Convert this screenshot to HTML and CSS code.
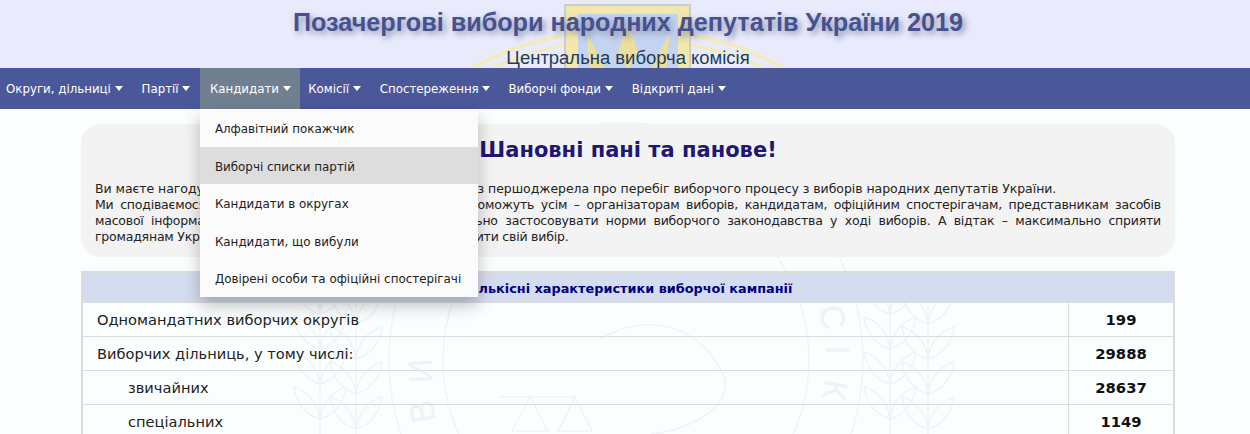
FILE: index.html
```html
<!DOCTYPE html>
<html lang="uk">
  <head>
    <meta charset="UTF-8" />
    <meta name="viewport" content="width=device-width, initial-scale=1.0" />
    <title>Позачергові вибори народних депутатів України 2019</title>
    <link rel="stylesheet" href="styles.css">
  </head>
  <body>
    <header>
      <svg class="header-emblem" viewBox="0 0 400 70" width="400" height="70" aria-hidden="true">
        <g fill="none" stroke="#f1ebbd">
          <path d="M42 70 C70 52 100 42 137 35" stroke-width="4"/>
          <path d="M60 70 C85 58 110 50 137 45" stroke-width="3"/>
          <path d="M262 35 C300 42 330 52 358 70" stroke-width="4"/>
          <path d="M262 45 C290 50 315 58 340 70" stroke-width="3"/>
        </g>
        <path d="M137 5 H262 V70 H137 Z" fill="#f2e8ab" stroke="#c9cbd6" stroke-width="2"/>
        <path d="M150 14 H250 V70 H150 Z" fill="#c3d3f1"/>
        <path d="M158 32 L178 70 H162 Z M242 32 L222 70 H238 Z M200 22 L190 52 L200 70 L210 52 Z" fill="#ecdf9c"/>
      </svg>
      <h1>Позачергові вибори народних депутатів України 2019</h1>
      <h2>Центральна виборча комісія</h2>
    </header>
    <nav>
      <a href="#okruhy">Округи, дільниці <i class="caret"></i></a>
      <a href="#partii" class="tight">Партії <i class="caret"></i></a>
      <div class="dropdown">
        <a href="#kandydaty" class="selected">Кандидати <i class="caret"></i></a>
        <div class="dropdown-content">
          <a href="#index">Алфавітний покажчик</a>
          <a href="#lists" class="hover">Виборчі списки партій</a>
          <a href="#districts">Кандидати в округах</a>
          <a href="#dropped">Кандидати, що вибули</a>
          <a href="#trusted">Довірені особи та офіційні спостерігачі</a>
        </div>
      </div>
      <a href="#komisii">Комісії <i class="caret"></i></a>
      <a href="#observers" class="tight">Спостереження <i class="caret"></i></a>
      <a href="#funds">Виборчі фонди <i class="caret"></i></a>
      <a href="#open">Відкриті дані <i class="caret"></i></a>
    </nav>
    <main>
      <svg class="watermark" viewBox="0 0 1250 325" width="1250" height="325" aria-hidden="true">
        <defs>
          <g id="leaf-pair">
            <path d="M0 0 C-14 -4 -24 -16 -26 -32 C-12 -28 -2 -16 0 0 Z"/>
            <path d="M0 0 C14 -4 24 -16 26 -32 C12 -28 2 -16 0 0 Z"/>
          </g>
          <g id="wheat">
            <path d="M0 140 V-20"/>
            <use href="#leaf-pair" y="120"/>
            <use href="#leaf-pair" y="85"/>
            <use href="#leaf-pair" y="50"/>
            <use href="#leaf-pair" y="15"/>
          </g>
        </defs>
        <g fill="none" stroke="#f0f3f5" stroke-width="1.5">
          <circle cx="626" cy="251" r="237"/>
          <circle cx="626" cy="251" r="183"/>
          <use href="#wheat" x="320" y="190"/>
          <use href="#wheat" x="356" y="200"/>
          <use href="#wheat" x="890" y="190"/>
          <use href="#wheat" x="928" y="200"/>
          <path d="M530 288 L512 322 H548 Z M500 288 H560 M575 288 L558 322 H592 Z M575 288 H530"/>
          <path d="M600 230 C650 200 700 220 720 260 C740 290 700 320 650 325"/>
        </g>
        <text class="coin-text" x="422" y="303" transform="rotate(-100 422 303)">В</text>
        <text class="coin-text" x="420" y="262" transform="rotate(-92 420 262)">И</text>
        <text class="coin-text" x="833" y="208" transform="rotate(80 833 208)">С</text>
        <text class="coin-text" x="838" y="241" transform="rotate(90 838 241)">І</text>
        <text class="coin-text" x="835" y="281" transform="rotate(100 835 281)">К</text>
      </svg>
      <section class="greeting">
        <h3>Шановні пані та панове!</h3>
        <p>
          <span class="line loose">Ви маєте нагоду отримати повну і актуальну інформацію з першоджерела про перебіг виборчого процесу з виборів народних депутатів України.</span>
          <span class="line just">Ми сподіваємося, що розміщені на цьому сайті дані допоможуть усім – організаторам виборів, кандидатам, офіційним спостерігачам, представникам засобів</span>
          <span class="line just">масової інформації – правильно витлумачити та неухильно застосовувати норми виборчого законодавства у ході виборів. А відтак – максимально сприяти</span>
          <span class="line">громадянам України отримати інформацію та свідомо зробити свій вибір.</span>
        </p>
      </section>
      <table>
        <thead>
          <tr><th colspan="2">Кількісні характеристики виборчої кампанії</th></tr>
        </thead>
        <tbody>
          <tr><td>Одномандатних виборчих округів</td><td class="num">199</td></tr>
          <tr><td>Виборчих дільниць, у тому числі:</td><td class="num">29888</td></tr>
          <tr><td class="sub">звичайних</td><td class="num">28637</td></tr>
          <tr><td class="sub">спеціальних</td><td class="num">1149</td></tr>
        </tbody>
      </table>
    </main>
  </body>
</html>
```

FILE: styles.css
```css
html, body {
  height: 100%;
  overflow: hidden;
}
body {
  font-family: "DejaVu Sans", Verdana, sans-serif;
  color: black;
  background-color: #fbfeff;
  margin: 0;
  padding: 0;
}
header {
  position: relative;
  height: 68px;
  padding-left: 6px;
  background: #e9ebfd;
  text-align: center;
  overflow: hidden;
}
.header-emblem {
  position: absolute;
  left: 428px;
  top: 0;
}
header h1 {
  position: relative;
  margin: 0;
  padding-top: 5px;
  font-family: "Liberation Sans", Arial, sans-serif;
  font-size: 25.2px;
  line-height: 34px;
  font-weight: bold;
  color: #465290;
  text-shadow: 3px 3px 6px #8c92ac;
}
header h2 {
  position: relative;
  margin: 0;
  padding-top: 8px;
  font-family: "Liberation Sans", Arial, sans-serif;
  font-size: 18.45px;
  line-height: 21px;
  font-weight: normal;
  color: #1c3c5a;
}
nav {
  position: relative;
  z-index: 2;
  display: flex;
  height: 41px;
  background: #4a5899;
}
nav a {
  color: white;
  text-decoration: none;
  font-size: 11.8px;
  white-space: nowrap;
}
nav > a, .dropdown > a {
  display: block;
  height: 41px;
  line-height: 43px;
  padding: 0 10.5px 0 8.5px;
}
nav > a:first-child {
  padding-left: 6px;
}
nav > a.tight {
  padding-right: 9.5px;
}
.dropdown > a.selected {
  background: #708090;
  padding: 0 9px 0 10px;
}
.caret {
  display: inline-block;
  width: 0;
  height: 0;
  border-left: 4.5px solid transparent;
  border-right: 4.5px solid transparent;
  border-top: 5px solid white;
  vertical-align: 2px;
}
.dropdown {
  position: relative;
}
.dropdown-content {
  position: absolute;
  left: 0;
  top: 41px;
  width: 278px;
  background: #fbfbfb;
  box-shadow: 0 8px 16px rgba(0, 0, 0, 0.25);
}
.dropdown-content a {
  display: block;
  height: 37.6px;
  line-height: 40px;
  padding: 0 0 0 15px;
  color: #222;
  font-size: 11.9px;
}
.dropdown-content a.hover {
  background: #ddd;
}
main {
  position: relative;
  padding: 15px 75px 0 81px;
}
.watermark {
  position: absolute;
  left: 0;
  top: 0;
}
.coin-text {
  font-family: "Liberation Sans", Arial, sans-serif;
  font-size: 34px;
  fill: #eff2f4;
  text-anchor: middle;
  dominant-baseline: central;
}
.greeting {
  position: relative;
  height: 133px;
  box-sizing: border-box;
  padding: 12px 14px 0;
  background: #f4f3f4;
  border-radius: 20px;
}
.greeting h3 {
  margin: 0;
  font-size: 21px;
  line-height: 28px;
  font-weight: bold;
  text-align: center;
  color: #201674;
}
.greeting p {
  margin: 17px 0 0;
  font-size: 12.5px;
  line-height: 16px;
  letter-spacing: -0.21px;
  color: #222;
}
.line {
  display: block;
  white-space: nowrap;
}
.loose {
  letter-spacing: -0.05px;
}
.just {
  white-space: normal;
  text-align: justify;
  text-align-last: justify;
}
table {
  position: relative;
  width: 100%;
  margin-top: 14px;
  border-collapse: collapse;
  border: 2px solid #dcdcdc;
}
th {
  height: 27px;
  padding: 2px 0 0;
  background: #d4dcf0;
  color: #000080;
  font-size: 12.85px;
}
td {
  height: 33px;
  padding: 0 0 0 14px;
  border: 1px solid #dcdcdc;
  font-size: 14.6px;
  color: #222;
}
td.sub {
  padding-left: 45px;
}
td.num {
  width: 104px;
  padding: 0;
  text-align: center;
  font-size: 14.8px;
  font-weight: bold;
  color: #111;
}
```
